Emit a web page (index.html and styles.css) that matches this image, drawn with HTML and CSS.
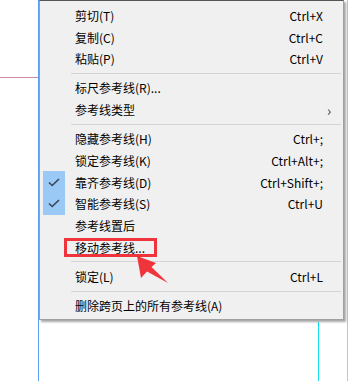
FILE: index.html
```html
<!DOCTYPE html>
<html lang="zh-CN">
<head>
    <meta charset="UTF-8">
    <title>参考线菜单</title>
    <link rel="stylesheet" href="styles.css">
</head>
<body>
    <div class="canvas">
        <div class="guide guide-left"></div>
        <div class="guide guide-pink"></div>
        <div class="guide guide-cyan"></div>
        <div class="guide guide-edge"></div>

        <div class="menu">
            <div class="item"><span class="check"></span><span class="label">剪切(T)</span><span class="key">Ctrl+X</span><span class="sub"></span></div>
            <div class="item"><span class="check"></span><span class="label">复制(C)</span><span class="key">Ctrl+C</span><span class="sub"></span></div>
            <div class="item"><span class="check"></span><span class="label">粘贴(P)</span><span class="key">Ctrl+V</span><span class="sub"></span></div>
            <div class="sep"></div>
            <div class="item"><span class="check"></span><span class="label">标尺参考线(R)...</span><span class="key"></span><span class="sub"></span></div>
            <div class="item"><span class="check"></span><span class="label">参考线类型</span><span class="key"></span><span class="sub">&rsaquo;</span></div>
            <div class="sep"></div>
            <div class="item"><span class="check"></span><span class="label">隐藏参考线(H)</span><span class="key">Ctrl+;</span><span class="sub"></span></div>
            <div class="item"><span class="check"></span><span class="label">锁定参考线(K)</span><span class="key">Ctrl+Alt+;</span><span class="sub"></span></div>
            <div class="item">
                <span class="check on">
                    <svg width="12" height="9" viewBox="0 0 12 9"><path d="M1 4.5L4.2 7.5L11 1" fill="none" stroke="#3b4652" stroke-width="1.6"/></svg>
                </span>
                <span class="label">靠齐参考线(D)</span><span class="key">Ctrl+Shift+;</span><span class="sub"></span>
            </div>
            <div class="item">
                <span class="check on">
                    <svg width="12" height="9" viewBox="0 0 12 9"><path d="M1 4.5L4.2 7.5L11 1" fill="none" stroke="#3b4652" stroke-width="1.6"/></svg>
                </span>
                <span class="label">智能参考线(S)</span><span class="key">Ctrl+U</span><span class="sub"></span>
            </div>
            <div class="item"><span class="check"></span><span class="label">参考线置后</span><span class="key"></span><span class="sub"></span></div>
            <div class="item"><span class="check"></span><span class="label">移动参考线...</span><span class="key"></span><span class="sub"></span></div>
            <div class="sep"></div>
            <div class="item"><span class="check"></span><span class="label">锁定(L)</span><span class="key">Ctrl+L</span><span class="sub"></span></div>
            <div class="sep"></div>
            <div class="item"><span class="check"></span><span class="label">删除跨页上的所有参考线(A)</span><span class="key"></span><span class="sub"></span></div>
        </div>

        <!-- annotation -->
        <div class="mark-box"></div>
        <svg class="mark-arrow" width="350" height="381" viewBox="0 0 350 381">
            <polygon points="137,256 156,263 151.5,267 168,283 147,271.5 141,278" fill="#f0343c"/>
        </svg>
    </div>
</body>
</html>
```

FILE: styles.css
```css
body {
    margin: 0;
    background: #fff;
    font-family: "Noto Sans CJK SC", "Noto Sans", sans-serif;
}

.canvas {
    position: relative;
    width: 350px;
    height: 381px;
    overflow: hidden;
    background: #fff;
}

.guide {
    position: absolute;
}

.guide-left {
    left: 38px;
    top: 0;
    width: 1px;
    height: 381px;
    background: #5aa0f0;
}

.guide-pink {
    left: 0;
    top: 77px;
    width: 38px;
    height: 1px;
    background: #d08aa6;
}

.guide-cyan {
    left: 318px;
    top: 322px;
    width: 1px;
    height: 60px;
    background: #16e0f0;
}

.guide-edge {
    left: 347px;
    top: 0;
    width: 1px;
    height: 381px;
    background: #c4c4c4;
}

.menu {
    position: absolute;
    left: 39px;
    top: 0;
    width: 303px;
    padding: 3.5px 0 3px;
    background: #f0f0f0;
    border: 1px solid #a0a0a0;
    border-top-color: #555;
    box-shadow: 2px 2px 2px rgba(0, 0, 0, 0.35);
    font-size: 12px;
    color: #000;
}

.item {
    display: flex;
    align-items: center;
    height: 21.7px;
}

.check {
    width: 22px;
    height: 100%;
    margin: 0 10px 0 3px;
    display: flex;
    align-items: center;
    justify-content: center;
}

.check.on {
    background: #99c9f4;
}

.label {
    flex: 1;
    white-space: nowrap;
}

.key {
    white-space: nowrap;
    text-align: right;
}

.sub {
    width: 20px;
    padding-left: 4px;
    box-sizing: border-box;
    font-size: 14px;
    color: #333;
}

.sep {
    height: 1px;
    margin: 3.25px 2px 3.25px 31px;
    background: #d4d4d4;
}

.mark-box {
    position: absolute;
    left: 64px;
    top: 238px;
    width: 87px;
    height: 13px;
    border: 3px solid #f0343c;
}

.mark-arrow {
    position: absolute;
    left: 0;
    top: 0;
}
```
